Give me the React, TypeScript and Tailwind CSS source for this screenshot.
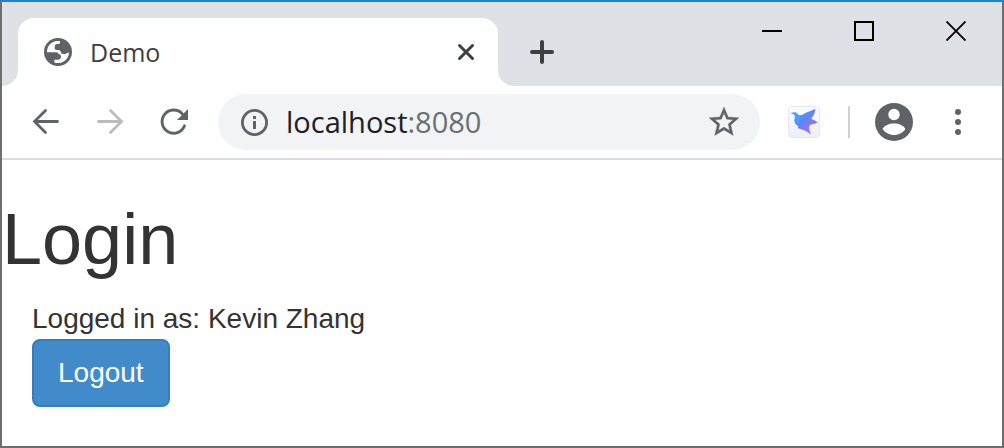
import React from "react";

function GlobeIcon() {
  return (
    <svg className="size-7 shrink-0" viewBox="0 0 28 28" aria-hidden="true">
      <circle cx="14" cy="14" r="14" fill="#5f6368" />
      <path
        fill="#fff"
        d="M3 14.300C2.800 8 7.500 3.200 13.500 3H16V4.600C16 5.400 15.400 5.900 14.600 5.900H13C11.600 5.900 11 6.600 11 7.700V8.300C11 9 10.600 9.300 10.600 10C10.600 11.300 11.500 11.900 12.600 11.900H14.400C15.800 11.900 16.600 12.700 16.800 14C17 15.300 18 16 19.300 16H21C22.600 16 23.200 14.400 25 14.500C24.800 20.500 20 25.100 14 25.100C12.700 25.100 11.500 24.900 10.400 24.500V21.700H13.600C15.800 21.700 17 20.600 17 18.700C17 17 15.800 16.300 14.600 16.100C14.100 14.900 13.400 14.300 12 14.300Z"
      />
    </svg>
  );
}

function StarIcon() {
  return (
    <svg className="size-9" viewBox="0 0 24 24" fill="#5f6368" aria-hidden="true">
      <path d="M22 9.240l-7.190-.62L12 2 9.190 8.630 2 9.240l5.460 4.730L5.820 21 12 17.270 18.180 21l-1.630-7.030L22 9.240zM12 15.400l-3.760 2.270 1-4.280-3.320-2.880 4.380-.38L12 6.100l1.710 4.040 4.380.38-3.320 2.880 1 4.280L12 15.400z" stroke="#5f6368" strokeWidth="0.200" />
    </svg>
  );
}

function BirdIcon() {
  return (
    <svg className="size-8" viewBox="0 0 32 32" aria-hidden="true">
      <defs>
        <linearGradient id="tile" x1="0" y1="0" x2="0" y2="1">
          <stop offset="0" stopColor="#fbfcff" />
          <stop offset="1" stopColor="#eeeefb" />
        </linearGradient>
        <linearGradient id="wing" x1="4" y1="7" x2="24" y2="27" gradientUnits="userSpaceOnUse">
          <stop offset="0" stopColor="#43b0f2" />
          <stop offset="0.500" stopColor="#5c86f7" />
          <stop offset="1" stopColor="#c060fa" />
        </linearGradient>
      </defs>
      <rect x="0.500" y="0.500" width="31" height="31" rx="3.500" fill="url(#tile)" stroke="#e6e7f6" />
      <path
        fill="url(#wing)"
        d="M2.300 6.900C4.500 6.800 6.300 5.600 8.200 6.500C9.700 7.300 10 9.200 12 9.200C14.500 9.200 16 7.500 19 6.200C22 5 25 4.200 27.500 2.700C27.300 6.200 25.800 9.500 23.300 12.600C24.800 14 27.500 14.500 29.500 16.200C28.200 17.600 26 18 23.800 18.200C21.800 18.800 20.700 20.300 21 22.300C21.300 24.400 22.600 26 22.700 28.500C20.500 26.500 18.500 25.200 16 24.200C14 23.400 12 22.800 9.500 22.300L10.500 20.500C7.800 18.800 6.300 17 6.300 14.500C6.500 12.500 7.300 11.500 6.600 9.600C5.800 8.300 4 7.600 2.300 6.900Z"
      />
    </svg>
  );
}

const navButton = "flex h-14 w-16 items-center justify-center";
const windowButton = "flex h-[58px] w-23 items-center justify-center";

function TitleBar() {
  return (
    <header className="flex h-21 bg-white">
      <div className="w-4 rounded-br-2xl bg-[#dee1e6]" />
      <div className="w-120 min-w-60 bg-[#dee1e6] pt-4">
        <div className="flex h-full items-center rounded-t-2xl bg-white pr-3 pl-6.5">
          <GlobeIcon />
          <span className="ml-4.5 flex-1 text-[25px] leading-8 text-[#3c4043]">Demo</span>
          <button aria-label="Close tab" className="flex size-10 items-center justify-center">
            <svg className="size-5" viewBox="0 0 20 20" stroke="#3c4043" strokeWidth="3" strokeLinecap="round" aria-hidden="true">
              <path d="M3.500 3.500L16.500 16.500M16.500 3.500L3.500 16.500" />
            </svg>
          </button>
        </div>
      </div>
      <div className="flex flex-1 items-start justify-between rounded-bl-2xl bg-[#dee1e6]">
        <button aria-label="New tab" className="mt-6.5 ml-6 flex size-12 items-center justify-center self-start pr-2">
          <svg className="size-6" viewBox="0 0 24 24" stroke="#3c4043" strokeWidth="4" strokeLinecap="round" aria-hidden="true">
            <path d="M2 12H22M12 2V22" />
          </svg>
        </button>
        <div className="flex">
          <button aria-label="Minimize" className={windowButton}>
            <svg className="size-5" viewBox="0 0 20 20" aria-hidden="true">
              <path d="M0 9H20V11H0Z" />
            </svg>
          </button>
          <button aria-label="Maximize" className={windowButton}>
            <svg className="size-5" viewBox="0 0 20 20" fill="none" stroke="#000" strokeWidth="2" aria-hidden="true">
              <rect x="1" y="1" width="18" height="18" />
            </svg>
          </button>
          <button aria-label="Close window" className={windowButton}>
            <svg className="size-5" viewBox="0 0 20 20" stroke="#000" strokeWidth="1.800" aria-hidden="true">
              <path d="M0.500 0.500L19.500 19.500M19.500 0.500L0.500 19.500" />
            </svg>
          </button>
        </div>
      </div>
    </header>
  );
}

function Toolbar() {
  return (
    <nav className="flex items-center border-b-2 border-[#dadce0] bg-white px-3 py-2">
      <button aria-label="Back" className={navButton}>
        <svg className="size-8" viewBox="0 0 32 32" fill="none" stroke="#5f6368" strokeWidth="2.800" strokeLinecap="round" aria-hidden="true">
          <path d="M4.500 15.500H27.500M15.500 4.500L4.500 15.500L15.500 26.500" />
        </svg>
      </button>
      <button aria-label="Forward" className={navButton}>
        <svg className="size-8" viewBox="0 0 32 32" fill="none" stroke="#babcbe" strokeWidth="2.800" strokeLinecap="round" aria-hidden="true">
          <path d="M4.500 15.500H27.500M16.500 4.500L27.500 15.500L16.500 26.500" />
        </svg>
      </button>
      <button aria-label="Reload" className={navButton}>
        <svg className="size-8" viewBox="0 0 32 32" fill="none" aria-hidden="true">
          <path d="M26.500 19.800A11.600 11.600 0 1 1 24.200 7.800" stroke="#5f6368" strokeWidth="2.900" strokeLinecap="round" />
          <path d="M30 3V14H19Z" fill="#5f6368" />
        </svg>
      </button>
      <div className="ml-3 flex h-14 min-w-0 flex-1 items-center rounded-full bg-[#f1f3f4] pr-4.5 pl-5.5">
        <button aria-label="View site information" className="flex shrink-0">
          <svg className="size-7" viewBox="0 0 28 28" fill="none" aria-hidden="true">
            <circle cx="14.500" cy="14.500" r="12.100" stroke="#5f6368" strokeWidth="2.800" />
            <path d="M13 8H16V11H13ZM13 13H16V21H13Z" fill="#5f6368" />
          </svg>
        </button>
        <div
          role="textbox"
          aria-label="Address"
          contentEditable
          suppressContentEditableWarning
          spellCheck={false}
          className="ml-4.5 min-w-0 flex-1 truncate text-[29px] leading-10 text-[#202124] outline-none"
        >
          localhost<span className="text-[#6b6f74]">:8080</span>
        </div>
        <button aria-label="Bookmark this page" className="flex shrink-0">
          <StarIcon />
        </button>
      </div>
      <button aria-label="Bird extension" className="ml-7 flex shrink-0">
        <BirdIcon />
      </button>
      <div className="ml-7 h-8 w-0.5 bg-[#cfd0d2]" />
      <button aria-label="Profile" className="ml-6 flex shrink-0">
        <svg className="size-10" viewBox="0 0 40 40" aria-hidden="true">
          <circle cx="20" cy="20" r="19" fill="#5f6368" />
          <circle cx="20" cy="12.500" r="5.700" fill="#fff" />
          <path d="M8.600 27C10.500 23.600 15 21.600 20 21.600S29.500 23.600 31.400 27C29 30.500 24.800 33 20 33S11 30.500 8.600 27Z" fill="#fff" />
        </svg>
      </button>
      <button aria-label="Menu" className="ml-3 flex h-14 w-16 shrink-0 items-center justify-center">
        <svg className="size-7" viewBox="0 0 28 28" fill="#5f6368" aria-hidden="true">
          <circle cx="14" cy="4" r="3" />
          <circle cx="14" cy="14" r="3" />
          <circle cx="14" cy="24" r="3" />
        </svg>
      </button>
    </nav>
  );
}

export default function App() {
  return (
    <div className="flex min-h-screen flex-col border-2 border-[#6e6e6e] border-t-[#1a84d8] bg-white font-['Open_Sans','Noto_Sans',sans-serif]">
      <TitleBar />
      <Toolbar />
      <main className="flex-1 pt-10 font-['Liberation_Sans',Arial,sans-serif] text-[28px] leading-10 text-[#333]">
        <h1 className="mb-5 text-[72px] leading-[79px] font-medium">Login</h1>
        <div className="px-7.5">
          <p>Logged in as: Kevin Zhang</p>
          <button className="block rounded-lg border-2 border-[#357ebd] bg-[#428bca] px-6 py-3 text-white">
            Logout
          </button>
        </div>
      </main>
    </div>
  );
}
